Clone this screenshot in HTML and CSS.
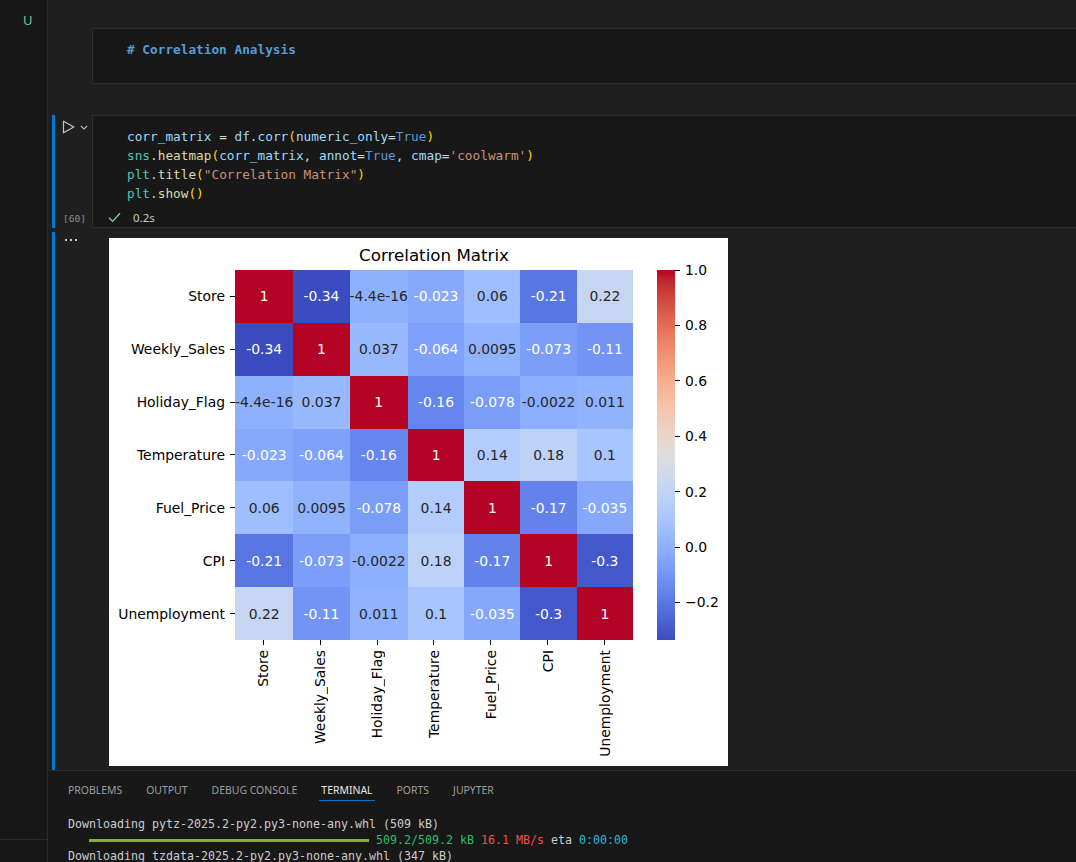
FILE: index.html
```html
<!DOCTYPE html>
<html>
<head>
<meta charset="utf-8">
<title>Notebook</title>
<link rel="stylesheet" href="styles.css">
</head>
<body>
<div class="app">
  <aside class="sidebar">
    <div class="side-top"><span class="git-u">U</span></div>
    <div class="side-bottom"></div>
  </aside>
  <main class="main">
    <section class="notebook">
      <div class="cell-row md-row">
        <div class="gutter"></div>
        <div class="cell-box md-box"># Correlation Analysis</div>
      </div>

      <div class="cell-row code-row">
        <div class="gutter code-gutter">
          <div class="focus-bar"></div>
          <div class="gutter-inner">
            <div class="run-row">
              <svg class="run-icon" width="13" height="14" viewBox="0 0 13 14"><path d="M1.5 1.2 L11.8 7 L1.5 12.8 Z" fill="none" stroke="#c5c5c5" stroke-width="1.2" stroke-linejoin="round"/></svg>
              <svg class="chev" width="8" height="5" viewBox="0 0 8 5"><polyline points="0.8,0.8 4,4 7.2,0.8" fill="none" stroke="#c5c5c5" stroke-width="1.1"/></svg>
            </div>
            <div class="exec-count">[60]</div>
          </div>
        </div>
        <div class="cell-box code-box">
<pre class="code"><span class="v">corr_matrix</span> = <span class="v">df</span>.<span class="v">corr</span><span class="b">(</span><span class="v">numeric_only</span>=<span class="k">True</span><span class="b">)</span>
<span class="c">sns</span>.<span class="f">heatmap</span><span class="b">(</span><span class="v">corr_matrix</span>, <span class="v">annot</span>=<span class="k">True</span>, <span class="v">cmap</span>=<span class="s">'coolwarm'</span><span class="b">)</span>
<span class="c">plt</span>.<span class="f">title</span><span class="b">(</span><span class="s">"Correlation Matrix"</span><span class="b">)</span>
<span class="c">plt</span>.<span class="f">show</span><span class="b">()</span></pre>
          <div class="status">
            <svg width="13" height="11" viewBox="0 0 13 11"><polyline points="1,5.8 4.6,9.4 12,1.2" fill="none" stroke="#89d185" stroke-width="1.3"/></svg>
            <span>0.2s</span>
          </div>
        </div>
      </div>

      <div class="cell-row out-row">
        <div class="gutter out-gutter">
          <div class="focus-bar"></div>
          <div class="more"><span></span><span></span><span></span></div>
        </div>
        <div class="output">
          <div class="figure">
            <div class="fig-title">Correlation Matrix</div>

            <div class="ylabels">
              <div class="ylab"><span>Store</span><i></i></div>
              <div class="ylab"><span>Weekly_Sales</span><i></i></div>
              <div class="ylab"><span>Holiday_Flag</span><i></i></div>
              <div class="ylab"><span>Temperature</span><i></i></div>
              <div class="ylab"><span>Fuel_Price</span><i></i></div>
              <div class="ylab"><span>CPI</span><i></i></div>
              <div class="ylab"><span>Unemployment</span><i></i></div>
            </div>

            <div class="heatmap">
              <div class="hc lt" style="background:#b40426">1</div>
              <div class="hc lt" style="background:#3b4cc0">-0.34</div>
              <div class="hc dk" style="background:#8eb1fe">-4.4e-16</div>
              <div class="hc lt" style="background:#86a9fc">-0.023</div>
              <div class="hc dk" style="background:#9ebeff">0.06</div>
              <div class="hc lt" style="background:#5876e2">-0.21</div>
              <div class="hc dk" style="background:#c6d6f2">0.22</div>

              <div class="hc lt" style="background:#3b4cc0">-0.34</div>
              <div class="hc lt" style="background:#b40426">1</div>
              <div class="hc dk" style="background:#98b9ff">0.037</div>
              <div class="hc lt" style="background:#7ea1f9">-0.064</div>
              <div class="hc dk" style="background:#91b3fe">0.0095</div>
              <div class="hc lt" style="background:#7b9ef9">-0.073</div>
              <div class="hc lt" style="background:#7294f4">-0.11</div>

              <div class="hc dk" style="background:#8eb1fe">-4.4e-16</div>
              <div class="hc dk" style="background:#98b9ff">0.037</div>
              <div class="hc lt" style="background:#b40426">1</div>
              <div class="hc lt" style="background:#6586ec">-0.16</div>
              <div class="hc lt" style="background:#7a9df8">-0.078</div>
              <div class="hc dk" style="background:#8db0fe">-0.0022</div>
              <div class="hc dk" style="background:#91b3fe">0.011</div>

              <div class="hc lt" style="background:#86a9fc">-0.023</div>
              <div class="hc lt" style="background:#7ea1f9">-0.064</div>
              <div class="hc lt" style="background:#6586ec">-0.16</div>
              <div class="hc lt" style="background:#b40426">1</div>
              <div class="hc dk" style="background:#b3ccfb">0.14</div>
              <div class="hc dk" style="background:#bcd2f7">0.18</div>
              <div class="hc dk" style="background:#a8c5fe">0.1</div>

              <div class="hc dk" style="background:#9ebeff">0.06</div>
              <div class="hc dk" style="background:#91b3fe">0.0095</div>
              <div class="hc lt" style="background:#7a9df8">-0.078</div>
              <div class="hc dk" style="background:#b3ccfb">0.14</div>
              <div class="hc lt" style="background:#b40426">1</div>
              <div class="hc lt" style="background:#6383eb">-0.17</div>
              <div class="hc lt" style="background:#85a8fc">-0.035</div>

              <div class="hc lt" style="background:#5876e2">-0.21</div>
              <div class="hc lt" style="background:#7b9ef9">-0.073</div>
              <div class="hc dk" style="background:#8db0fe">-0.0022</div>
              <div class="hc dk" style="background:#bcd2f7">0.18</div>
              <div class="hc lt" style="background:#6383eb">-0.17</div>
              <div class="hc lt" style="background:#b40426">1</div>
              <div class="hc lt" style="background:#4359cb">-0.3</div>

              <div class="hc dk" style="background:#c6d6f2">0.22</div>
              <div class="hc lt" style="background:#7294f4">-0.11</div>
              <div class="hc dk" style="background:#91b3fe">0.011</div>
              <div class="hc dk" style="background:#a8c5fe">0.1</div>
              <div class="hc lt" style="background:#85a8fc">-0.035</div>
              <div class="hc lt" style="background:#4359cb">-0.3</div>
              <div class="hc lt" style="background:#b40426">1</div>
            </div>

            <div class="cbar"></div>
            <div class="cbar-axis">
              <div class="ctick" style="top:0%"><i></i><span>1.0</span></div>
              <div class="ctick" style="top:14.98%"><i></i><span>0.8</span></div>
              <div class="ctick" style="top:29.95%"><i></i><span>0.6</span></div>
              <div class="ctick" style="top:44.93%"><i></i><span>0.4</span></div>
              <div class="ctick" style="top:59.91%"><i></i><span>0.2</span></div>
              <div class="ctick" style="top:74.88%"><i></i><span>0.0</span></div>
              <div class="ctick" style="top:89.86%"><i></i><span>−0.2</span></div>
            </div>

            <div class="xlabels">
              <div class="xlab"><i></i><span>Store</span></div>
              <div class="xlab"><i></i><span>Weekly_Sales</span></div>
              <div class="xlab"><i></i><span>Holiday_Flag</span></div>
              <div class="xlab"><i></i><span>Temperature</span></div>
              <div class="xlab"><i></i><span>Fuel_Price</span></div>
              <div class="xlab"><i></i><span>CPI</span></div>
              <div class="xlab"><i></i><span>Unemployment</span></div>
            </div>
          </div>
        </div>
      </div>
    </section>

    <section class="panel">
      <div class="tabs">
        <span class="tab">PROBLEMS</span>
        <span class="tab">OUTPUT</span>
        <span class="tab">DEBUG CONSOLE</span>
        <span class="tab active">TERMINAL</span>
        <span class="tab">PORTS</span>
        <span class="tab">JUPYTER</span>
      </div>
      <div class="term">
        <div class="tline">Downloading pytz-2025.2-py2.py3-none-any.whl (509 kB)</div>
        <div class="tline pline"><span class="pbar"></span><span class="tg">509.2/509.2 kB</span><span class="tr">16.1 MB/s</span><span>eta</span><span class="tc">0:00:00</span></div>
        <div class="tline">Downloading tzdata-2025.2-py2.py3-none-any.whl (347 kB)</div>
      </div>
    </section>
  </main>
</div>
</body>
</html>
```

FILE: styles.css
```css
* { box-sizing: border-box; margin: 0; padding: 0; }

html, body {
  width: 1076px;
  height: 862px;
  overflow: hidden;
  background: #1f1f1f;
}

.app {
  display: flex;
  height: 862px;
}

/* ---------- sidebar ---------- */
.sidebar {
  width: 48px;
  flex: none;
  background: #181818;
  border-right: 1px solid #2b2b2b;
  display: flex;
  flex-direction: column;
}
.side-top {
  flex: 1;
  padding: 11px 0 0 23px;
}
.git-u {
  font: 13px/18px "Noto Sans", sans-serif;
  color: #73c991;
}
.side-bottom {
  height: 23px;
  border-top: 1px solid #2b2b2b;
}

/* ---------- main ---------- */
.main {
  flex: 1;
  min-width: 0;
  display: flex;
  flex-direction: column;
}

.notebook {
  height: 770px;
  flex: none;
  padding-top: 28px;
  overflow: hidden;
}

.cell-row { display: flex; }

.gutter {
  width: 44px;
  flex: none;
}

.cell-box {
  flex: 1;
  min-width: 0;
  border: 1px solid #2e2e2e;
  border-right: none;
  background: #181818;
}

.md-box {
  height: 56px;
  padding: 11px 0 0 34px;
  font: bold 12.75px/19.3px "DejaVu Sans Mono", monospace;
  color: #569cd6;
}

/* code cell */
.code-row {
  margin-top: 31px;
  height: 113px;
}
.code-gutter { display: flex; }
.focus-bar {
  width: 3px;
  margin-left: 4px;
  background: #0078d4;
  flex: none;
}
.gutter-inner {
  flex: 1;
  display: flex;
  flex-direction: column;
  justify-content: space-between;
  padding: 5px 0 0 7px;
}
.run-row {
  display: flex;
  align-items: center;
  gap: 5px;
}
.chev { margin-top: 1px; }
.exec-count {
  font: 9.5px/19px "DejaVu Sans Mono", monospace;
  color: #8b8b8b;
  padding: 0 0 0 1px;
}

.code-box {
  height: 113px;
  display: flex;
  flex-direction: column;
}
.code {
  font: 12.75px/19.3px "DejaVu Sans Mono", monospace;
  color: #d4d4d4;
  padding: 10.5px 0 0 34px;
}
.code .v { color: #9cdcfe; }
.code .c { color: #4ec9b0; }
.code .f { color: #dcdcaa; }
.code .k { color: #569cd6; }
.code .s { color: #ce9178; }
.code .b { color: #ffd700; }

.status {
  margin-top: auto;
  height: 19px;
  display: flex;
  align-items: center;
  gap: 12px;
  padding-left: 15px;
  font: 11.5px "Noto Sans", sans-serif;
  color: #cccccc;
}

/* output */
.out-row {
  margin-top: 4px;
  height: 538px;
}
.out-gutter { display: flex; }
.more {
  display: flex;
  gap: 3px;
  padding: 7px 0 0 10px;
  height: 10px;
}
.more span {
  width: 2px;
  height: 2px;
  background: #c5c5c5;
}
.output {
  padding: 6px 0 0 17px;
}

/* ---------- figure ---------- */
.figure {
  width: 619px;
  height: 528px;
  background: #ffffff;
  display: grid;
  grid-template-columns: 126px 398px 24px 18px 53px;
  grid-template-rows: 32px 370px 126px;
  font-family: "DejaVu Sans", sans-serif;
  color: #000;
}
.fig-title {
  grid-column: 2;
  grid-row: 1;
  text-align: center;
  font-size: 16.7px;
  line-height: 20px;
  padding-top: 7px;
}

.ylabels {
  grid-column: 1;
  grid-row: 2;
  display: grid;
  grid-template-rows: repeat(7, 1fr);
}
.ylab {
  display: flex;
  justify-content: flex-end;
  align-items: center;
  font-size: 13.9px;
}
.ylab i {
  width: 5px;
  height: 1px;
  background: #000;
  margin-left: 5px;
}

.heatmap {
  grid-column: 2;
  grid-row: 2;
  display: grid;
  grid-template-columns: repeat(7, 1fr);
  grid-template-rows: repeat(7, 1fr);
}
.hc {
  display: flex;
  align-items: center;
  justify-content: center;
  font-size: 13.9px;
  white-space: nowrap;
}
.hc.lt { color: #ffffff; }
.hc.dk { color: #262626; }

.cbar {
  grid-column: 4;
  grid-row: 2;
  background: linear-gradient(to top,
    #3b4cc0 0%, #445acc 3.125%, #4d68d7 6.25%, #5775e1 9.375%,
    #6282ea 12.5%, #6c8ef1 15.625%, #779af7 18.75%, #82a5fb 21.875%,
    #8db0fe 25%, #98b9ff 28.125%, #a3c2ff 31.25%, #aec9fd 34.375%,
    #b8d0f9 37.5%, #c2d5f4 40.625%, #ccd9ee 43.75%, #d5dbe6 46.875%,
    #dddddd 50%, #e5d8d1 53.125%, #ecd3c5 56.25%, #f1ccb9 59.375%,
    #f5c4ad 62.5%, #f7bba0 65.625%, #f7b194 68.75%, #f7a687 71.875%,
    #f49a7b 75%, #f18d6f 78.125%, #ec7f63 81.25%, #e57058 84.375%,
    #de604d 87.5%, #d55042 90.625%, #cb3e38 93.75%, #c0282f 96.875%,
    #b40426 100%);
}
.cbar-axis {
  grid-column: 5;
  grid-row: 2;
  position: relative;
}
.ctick {
  position: absolute;
  left: 0;
  display: flex;
  align-items: center;
  transform: translateY(-50%);
  font-size: 13.9px;
  line-height: 16px;
}
.ctick i {
  width: 5px;
  height: 1px;
  background: #000;
  margin-right: 5px;
}

.xlabels {
  grid-column: 2;
  grid-row: 3;
  display: grid;
  grid-template-columns: repeat(7, 1fr);
}
.xlab {
  display: flex;
  flex-direction: column;
  align-items: center;
}
.xlab i {
  width: 1px;
  height: 5px;
  background: #000;
}
.xlab span {
  margin-top: 5px;
  writing-mode: vertical-rl;
  transform: rotate(180deg);
  font-size: 13.9px;
  line-height: 16px;
}

/* ---------- panel ---------- */
.panel {
  flex: 1;
  background: #181818;
  border-top: 1px solid #2b2b2b;
  overflow: hidden;
}
.tabs {
  display: flex;
  gap: 20px;
  padding: 11px 0 0 18px;
}
.tab {
  padding: 0 2px 2px;
  font: 10.45px/16px "Noto Sans", sans-serif;
  color: #9d9d9d;
  border-bottom: 1px solid transparent;
}
.tab.active {
  color: #e7e7e7;
  border-bottom-color: #0078d4;
}
.term {
  padding: 15px 0 0 20px;
  font: 11.63px/16px "DejaVu Sans Mono", monospace;
  color: #cccccc;
}
.tline {
  height: 16px;
  display: flex;
  align-items: center;
  white-space: pre;
}
.pline { gap: 7px; padding-left: 21px; }
.pbar {
  width: 280px;
  height: 3px;
  background: #86b030;
}
.tg { color: #2fbc6b; }
.tr { color: #f14c4c; }
.tc { color: #29b8db; }
```
